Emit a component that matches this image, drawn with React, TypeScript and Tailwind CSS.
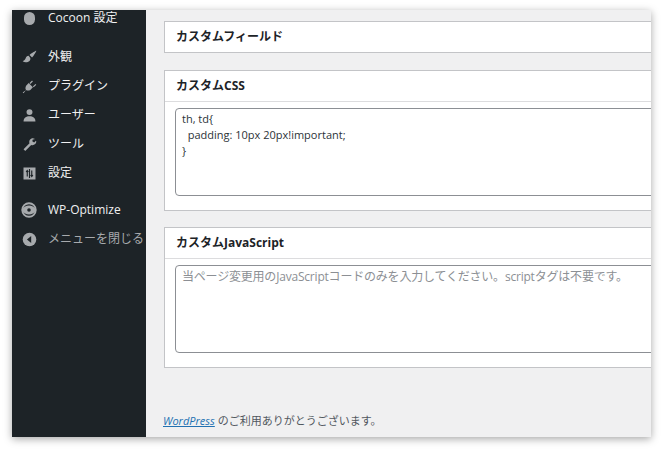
import React from "react";

const ic = "#a7aaad";

function Item({ icon, label, dim, cls }: { icon: React.ReactNode; label: string; dim?: boolean; cls: string }) {
  return (
    <div className={`flex items-center h-[20px] pl-[7px] whitespace-nowrap ${cls}`}>
      <div className="w-[20px] h-[20px] flex items-center justify-center">{icon}</div>
      <span className={`ml-[9px] text-[12px] ${dim ? "text-[#a7aaad]" : "text-[#f0f0f1]"}`}>{label}</span>
    </div>
  );
}

export default function App() {
  const font = { fontFamily: '"Open Sans", "Noto Sans CJK JP", sans-serif' };
  return (
    <div className="w-[664px] h-[450px] bg-white overflow-hidden" style={font}>
      <div className="ml-[12px] mt-[10px] w-[639px] h-[427px] flex overflow-hidden shadow-[0_2px_8px_rgba(0,0,0,0.35)]">
        <div className="w-[134px] shrink-0 bg-[#1d2327]">
          <Item cls="mt-[-2px]" label="Cocoon 設定" icon={<div className="w-[11px] h-[13px] rounded-full bg-[#a7aaad]" />} />
          <Item cls="mt-[19px]" label="外観" icon={
            <svg width="17" height="17" viewBox="0 0 20 20" fill={ic}><path d="M18 2c-1 0-6 3-8 5l3 3c2-2 5-7 5-8zM9 8c-2 0-3 1-3.5 3C5 13 3 14 2 14.5 4 16 8 16 10 14c1-1 1-2 1-3.5z"/></svg>} />
          <Item cls="mt-[9px]" label="プラグイン" icon={
            <svg width="17" height="17" viewBox="0 0 20 20" fill={ic}><path d="M13 3l-3 3 1 1 3-3zM17 7l-3 3 1 1 3-3zM9 6l5 5-3 3c-2 1-4 1-5 0l-3 4-1-1 4-3c-1-1-1-3 0-5z"/></svg>} />
          <Item cls="mt-[9px]" label="ユーザー" icon={
            <svg width="17" height="17" viewBox="0 0 20 20" fill={ic}><circle cx="10" cy="6" r="3.5"/><path d="M3 17c0-4 3-6 7-6s7 2 7 6z"/></svg>} />
          <Item cls="mt-[9px]" label="ツール" icon={
            <svg width="17" height="17" viewBox="0 0 20 20" fill={ic}><path d="M16.5 3.5l-3 1v2l2 1 2-2 .5 1c0 3-3 5-6 4l-7 7-2-2 7-7c-1-3 1-6 4-6z"/></svg>} />
          <Item cls="mt-[9px]" label="設定" icon={
            <svg width="15" height="15" viewBox="0 0 20 20"><rect x="2" y="2" width="16" height="16" fill={ic}/><path d="M7 6v8M5.5 8l1.5-2 1.5 2M13 14V6M11.5 12l1.5 2 1.5-2M10 4v12" stroke="#1d2327" strokeWidth="1.5" fill="none"/></svg>} />
          <Item cls="mt-[17px]" label="WP-Optimize" icon={
            <svg width="18" height="18" viewBox="0 0 20 20" fill="none" stroke={ic} strokeWidth="2"><circle cx="10" cy="10" r="7.5"/><path d="M3 10c2-3 4-4 7-4s5 1 7 4c-2 3-4 4-7 4s-5-1-7-4z" fill={ic}/><circle cx="10" cy="10" r="2" fill="#1d2327" stroke="none"/></svg>} />
          <Item cls="mt-[9px]" dim label="メニューを閉じる" icon={
            <svg width="17" height="17" viewBox="0 0 20 20"><circle cx="10" cy="10" r="8" fill={ic}/><path d="M12 6v8l-5-4z" fill="#1d2327"/></svg>} />
        </div>
        <div className="flex-1 bg-[#f0f0f1] pl-[18px] pt-[11px] overflow-hidden relative text-[#1d2327]">
          <div className="w-[540px] h-[32px] bg-white border border-[#c3c4c7] flex items-center pl-[11px] text-[12px] font-bold">カスタムフィールド</div>
          <div className="w-[540px] mt-[17px] bg-white border border-[#c3c4c7]">
            <div className="h-[31px] border-b border-[#dcdcde] flex items-center pl-[11px] text-[12px] font-bold">カスタムCSS</div>
            <div className="px-[10px] pt-[6px] pb-[14px]">
              <div className="h-[88px] border border-[#8c8f94] rounded-[4px] px-[6px] pt-[2px] text-[11px] leading-[16px] text-[#2c3338] whitespace-pre">{"th, td{\n  padding: 10px 20px!important;\n}"}</div>
            </div>
          </div>
          <div className="w-[540px] mt-[16px] bg-white border border-[#c3c4c7]">
            <div className="h-[31px] border-b border-[#dcdcde] flex items-center pl-[11px] text-[12px] font-bold">カスタムJavaScript</div>
            <div className="px-[10px] pt-[6px] pb-[14px]">
              <div className="h-[88px] border border-[#8c8f94] rounded-[4px] px-[6px] pt-[3px] text-[12px] leading-[16px] text-[#8c8f94] whitespace-nowrap tracking-[-0.2px]">当ページ変更用のJavaScriptコードのみを入力してください。scriptタグは不要です。</div>
            </div>
          </div>
          <div className="absolute left-[17px] top-[403px] text-[11px] text-[#50575e]">
            <span className="italic underline text-[#2271b1]">WordPress</span> のご利用ありがとうございます。
          </div>
        </div>
      </div>
    </div>
  );
}
